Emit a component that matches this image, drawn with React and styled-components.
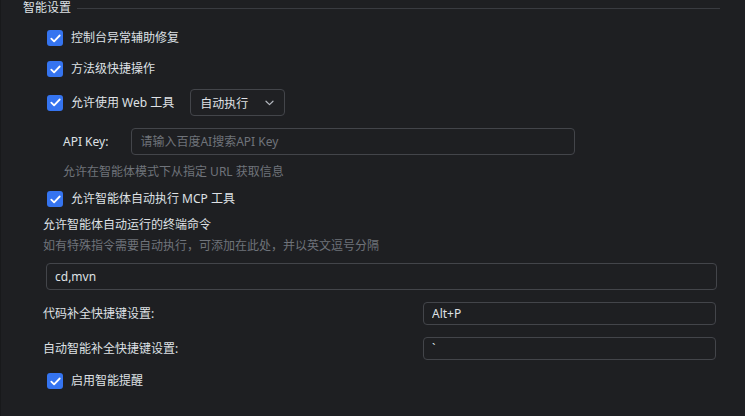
import React, { useState } from "react"
import styled, { createGlobalStyle } from "styled-components"

const GlobalStyle = createGlobalStyle`
  html, body {
    margin: 0;
    background: #1e1f22;
  }
  body {
    font-family: "Noto Sans", "Noto Sans CJK SC", sans-serif;
    font-size: 12px;
    color: #dfe1e5;
  }
`

const Panel = styled.div`
  width: 745px;
  height: 416px;
  box-sizing: border-box;
  border-left: 1px solid #18191b;
  background: #1e1f22;
  display: flex;
  flex-direction: column;
`

const Header = styled.div`
  display: flex;
  align-items: center;
  height: 16px;
  padding: 0 25px 0 22px;
`

const Title = styled.span`
  line-height: 16px;
  white-space: nowrap;
`

const Rule = styled.div`
  flex: 1;
  height: 1px;
  margin-left: 6px;
  background: #393b40;
`

const Row = styled.div`
  display: flex;
  align-items: center;
  margin-top: ${props => props.$top}px;
  padding-left: ${props => props.$indent}px;
  min-height: ${props => props.$height || 16}px;
`

const Box = styled.span`
  width: 16px;
  height: 16px;
  border-radius: 3px;
  background: #3574f0;
  display: inline-flex;
  align-items: center;
  justify-content: center;
  flex: none;
  cursor: pointer;
`

const Label = styled.span`
  line-height: 16px;
  margin-left: ${props => props.$gap || 0}px;
  white-space: nowrap;
`

const Hint = styled.div`
  color: #6f737a;
  line-height: 16px;
  margin-top: ${props => props.$top}px;
  padding-left: ${props => props.$indent}px;
`

const Select = styled.div`
  margin-left: 16px;
  width: 95px;
  height: 27px;
  box-sizing: border-box;
  border: 1px solid #43454a;
  border-radius: 4px;
  background: #1f2023;
  display: flex;
  align-items: center;
  justify-content: space-between;
  padding: 0 10px 0 9px;
`

const Input = styled.input`
  box-sizing: border-box;
  width: ${props => props.$width}px;
  height: ${props => props.$height || 27}px;
  margin-left: ${props => props.$left || 0}px;
  border: 1px solid #43454a;
  border-radius: 4px;
  background: #1e1f22;
  color: #dfe1e5;
  font: inherit;
  padding: 0 8px;
  outline: none;
  &::placeholder {
    color: #6f737a;
  }
`

const ShortcutInput = styled(Input)`
  margin-left: auto;
  margin-right: 29px;
`

const Check = () => (
  <Box>
    <svg width="11" height="9" viewBox="0 0 11 9" fill="none">
      <path d="M1.3 4.6 L4.1 7.3 L9.7 1.5" stroke="#fff" strokeWidth="1.8" strokeLinecap="round" strokeLinejoin="round" />
    </svg>
  </Box>
)

const Chevron = () => (
  <svg width="9" height="6" viewBox="0 0 9 6" fill="none">
    <path d="M1 1.2 L4.5 4.6 L8 1.2" stroke="#b4b8bf" strokeWidth="1.2" strokeLinecap="round" strokeLinejoin="round" />
  </svg>
)

export default function App() {
  const [command, setCommand] = useState("cd,mvn")
  const [completion, setCompletion] = useState("Alt+P")
  const [smartCompletion, setSmartCompletion] = useState("`")

  return (
    <Panel>
      <GlobalStyle />
      <Header>
        <Title>智能设置</Title>
        <Rule />
      </Header>

      <Row $top={14} $indent={46}>
        <Check />
        <Label $gap={8}>控制台异常辅助修复</Label>
      </Row>
      <Row $top={15} $indent={46}>
        <Check />
        <Label $gap={8}>方法级快捷操作</Label>
      </Row>
      <Row $top={12} $indent={46} $height={27}>
        <Check />
        <Label $gap={8}>允许使用 Web 工具</Label>
        <Select>
          <span>自动执行</span>
          <Chevron />
        </Select>
      </Row>

      <Row $top={12} $indent={62} $height={27}>
        <Label>API Key:</Label>
        <Input $left={23} $width={444} placeholder="请输入百度AI搜索API Key" />
      </Row>
      <Hint $top={9} $indent={62}>允许在智能体模式下从指定 URL 获取信息</Hint>

      <Row $top={11} $indent={46}>
        <Check />
        <Label $gap={8}>允许智能体自动执行 MCP 工具</Label>
      </Row>

      <Row $top={10} $indent={42}>
        <Label>允许智能体自动运行的终端命令</Label>
      </Row>
      <Hint $top={5} $indent={42}>如有特殊指令需要自动执行，可添加在此处，并以英文逗号分隔</Hint>
      <Row $top={9} $indent={45} $height={27}>
        <Input $width={671} value={command} onChange={e => setCommand(e.target.value)} />
      </Row>

      <Row $top={12} $indent={42} $height={23}>
        <Label>代码补全快捷键设置:</Label>
        <ShortcutInput
          $width={293}
          $height={23}
          value={completion}
          onChange={e => setCompletion(e.target.value)} />
      </Row>
      <Row $top={12} $indent={42} $height={23}>
        <Label>自动智能补全快捷键设置:</Label>
        <ShortcutInput
          $width={293}
          $height={23}
          value={smartCompletion}
          onChange={e => setSmartCompletion(e.target.value)} />
      </Row>

      <Row $top={13} $indent={46}>
        <Check />
        <Label $gap={8}>启用智能提醒</Label>
      </Row>
    </Panel>
  )
}
